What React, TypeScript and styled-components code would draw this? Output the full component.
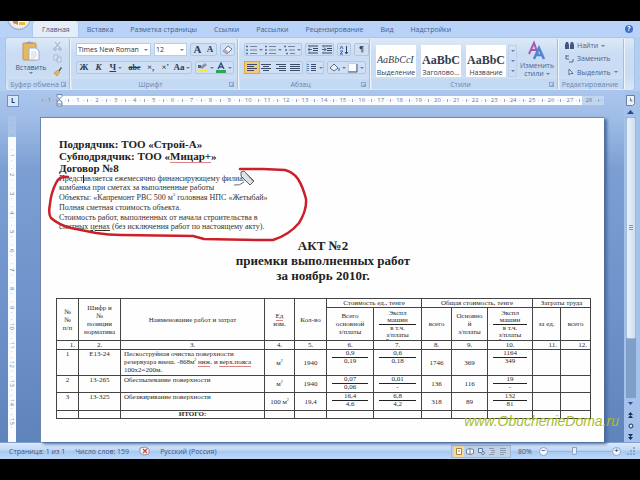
import React from "react";
import styled, { createGlobalStyle, css } from "styled-components";

const Global = createGlobalStyle`
  * { box-sizing: border-box; }
  html, body { margin: 0; background: #000; }
  button, select, input { font: inherit; color: inherit; margin: 0; padding: 0; border: 0; background: none; }
`;

const ui = `"Open Sans", "Noto Sans", sans-serif`;
const serif = `"Liberation Serif", "Times New Roman", serif`;

const Screen = styled.div`
  min-height: 100vh;
  padding: 21px 0;
  display: flex;
  flex-direction: column;
  background: #000;
  font-family: ${ui};
  font-size: 7px;
  line-height: 9px;
  color: #33496f;
`;
const Window = styled.div`
  flex: 1;
  display: flex;
  flex-direction: column;
  background: #b3cef3;
`;

/* ---------- tabs ---------- */
const TabBar = styled.nav`
  position: relative;
  display: flex;
  height: 16px;
  padding-left: 33px;
  overflow: hidden;
  background: #b9d3f8;
`;
const OfficeOrb = styled.button`
  position: absolute;
  left: 7px;
  top: -15px;
  width: 24px;
  height: 24px;
  border-radius: 50%;
  border: 1px solid #8f9fb8;
  background: radial-gradient(circle, #fff 30%, #cfd6e2 90%);
  svg { display: block; }
`;
const Tab = styled.button<{ $active?: boolean }>`
  padding: 0 8px 0 9px;
  height: 16px;
  white-space: nowrap;
  border-radius: 3px 3px 0 0;
  color: #42608f;
  ${(p) => p.$active && css`
    background: #e4eefb;
    color: #3d5580;
    box-shadow: 0 0 2px #8fb0dc;
  `}
`;
const Help = styled.button`
  margin: 4px 7px 0 auto;
  width: 8px;
  height: 8px;
  border-radius: 50%;
  background: #3d6fcf;
  color: #fff;
  font-weight: 700;
  line-height: 8px;
`;

/* ---------- ribbon ---------- */
const Ribbon = styled.div`
  display: flex;
  gap: 2px;
  height: 54px;
  margin: 0 5px;
  padding: 1px 2px;
  border: 1px solid #a9c5e9;
  border-radius: 3px;
  background: linear-gradient(#dce9f8, #cbddf3 30%, #c9dcf3 70%, #d8e8fa);
`;
const Group = styled.section<{ $w: number }>`
  flex: 0 1 ${(p) => p.$w}px;
  min-width: 0;
  display: flex;
  flex-direction: column;
  border-right: 1px solid #a3bfe2;
  box-shadow: 1px 0 #eef5fd;
`;
const GroupBody = styled.div`
  flex: 1;
  display: flex;
  min-height: 0;
`;
const GroupLabel = styled.div`
  display: flex;
  align-items: center;
  height: 10px;
  padding-right: 3px;
  color: #6a86ae;
  background: #c3d9f3;
  white-space: nowrap;
  span { flex: 1; text-align: center; }
`;
const Launcher = styled.button`
  width: 5px;
  height: 5px;
  border: solid #8fa6c8;
  border-width: 1px 0 0 1px;
  background: linear-gradient(135deg, transparent 50%, #8fa6c8 50%);
`;
const Paste = styled.button`
  width: 44px;
  margin-left: 1px;
  display: flex;
  flex-direction: column;
  align-items: center;
  color: #42557a;
`;
const SmallStack = styled.div`
  display: flex;
  flex-direction: column;
  justify-content: space-around;
  button { display: flex; }
`;
const Rows = styled.div`
  flex: 1;
  display: flex;
  flex-direction: column;
  gap: 5px;
  padding: 4px 3px 0 4px;
`;
const Row = styled.div`
  display: flex;
  gap: 3px;
  height: 13px;
`;
const Strip = styled.div<{ $grow?: boolean }>`
  display: flex;
  align-items: stretch;
  flex: ${(p) => (p.$grow ? 1 : "none")};
  justify-content: space-between;
  border: 1px solid #b0c7e4;
  border-radius: 2px;
  background: #d0e0f4;
`;
const Tool = styled.button<{ $w?: number; $on?: boolean }>`
  width: ${(p) => p.$w ?? 14}px;
  display: flex;
  align-items: center;
  justify-content: center;
  gap: 2px;
  ${(p) => p.$on && css`background: #f8c877; box-shadow: 0 0 0 1px #d9a650;`}
`;
const Glyph = styled.span<{ $size?: number; $italic?: boolean; $deco?: string }>`
  font: 700 ${(p) => p.$size ?? 9}px/11px ${serif};
  font-style: ${(p) => (p.$italic ? "italic" : "normal")};
  text-decoration: ${(p) => p.$deco ?? "none"};
  color: #2c3c58;
`;
const Arrow = styled.i`
  width: 0;
  height: 0;
  border: 2px solid transparent;
  border-top-color: #6a7fa3;
  border-bottom: 0;
`;
const Combo = styled.div<{ $grow?: boolean }>`
  position: relative;
  display: flex;
  align-items: center;
  flex: ${(p) => (p.$grow ? "0 0 75px" : "0 0 33px")};
  background: #fff;
  border: 1px solid #b6cce8;
  select { appearance: none; width: 100%; padding-left: 1px; color: #2a3242; line-height: 11px; }
  ${Arrow} { position: absolute; right: 2px; pointer-events: none; }
`;
const Gallery = styled.div`
  flex: none;
  display: flex;
  gap: 5px;
  padding: 6px 2px 0 4px;
`;
const StyleCard = styled.button`
  flex: 0 0 40px;
  height: 32px;
  background: #fff;
  overflow: hidden;
  display: flex;
  flex-direction: column;
  align-items: center;
  justify-content: flex-end;
  color: #333c4e;
  white-space: nowrap;
`;
const Sample = styled.span<{ $soft?: boolean }>`
  width: 38px;
  overflow: hidden;
  text-align: left;
  line-height: 16px;
  font-family: ${serif};
  font-size: ${(p) => (p.$soft ? 10 : 12)}px;
  font-style: ${(p) => (p.$soft ? "italic" : "normal")};
  font-weight: ${(p) => (p.$soft ? 400 : 700)};
`;
const Scroller = styled.div`
  width: 9px;
  height: 32px;
  margin-left: -3px;
  display: flex;
  flex-direction: column;
  justify-content: space-around;
  align-items: center;
  border: 1px solid #bcd0ea;
  button { display: flex; }
`;
const ChangeStyles = styled.button`
  width: 36px;
  display: flex;
  flex-direction: column;
  align-items: center;
  line-height: 8px;
  color: #4a6290;
  span { display: flex; align-items: center; gap: 2px; }
`;
const EditList = styled.div`
  flex: 1;
  display: flex;
  flex-direction: column;
  justify-content: space-around;
  padding-left: 5px;
  button { display: flex; align-items: center; gap: 3px; color: #4a6290; }
`;

/* ---------- work area ---------- */
const Work = styled.div`
  flex: 1;
  display: flex;
  background: linear-gradient(#aac6ee, #9fbce6 8%, #7c9fd3 22%, #6f93ca 60%, #5f83bb);
`;
const LeftRail = styled.div`
  flex: 0 0 40px;
  display: flex;
  flex-direction: column;
  padding: 4px 0 0 7px;
`;
const TabStop = styled.button`
  width: 12px;
  height: 12px;
  border: 1px solid #6d8fc4;
  background: #dce8f8;
  color: #26375a;
  font-weight: 700;
  line-height: 10px;
`;
const VRuler = styled.div`
  flex: 1;
  width: 8px;
  margin: 9px 0 0 1px;
  display: flex;
  flex-direction: column;
  color: #6c7c97;
  font-size: 6px;
  background: linear-gradient(#a9c2e6 21px, #f8fbff 21px);
`;
const VMark = styled.span<{ $lead?: boolean }>`
  height: ${(p) => (p.$lead ? 30 : 19)}px;
  display: flex;
  align-items: center;
  justify-content: space-evenly;
  writing-mode: vertical-rl;
  line-height: 8px;
  &::before, &::after { content: "·"; }
`;
const Center = styled.div`
  flex: 1;
  min-width: 0;
  display: flex;
  flex-direction: column;
`;
const HRuler = styled.div`
  display: flex;
  height: 9px;
  margin: 5px 0 12px;
  color: #6c7c97;
  font-size: 6px;
  line-height: 9px;
`;
const Margin = styled.span`
  flex: 0 0 19px;
  text-align: center;
  background: #a9c2e6;
`;
const Scale = styled.div`
  position: relative;
  flex: 1;
  display: flex;
  background: linear-gradient(90deg, #fbfdff 96%, #c3d6f0 96%);
`;
const HMark = styled.span<{ $part?: number }>`
  flex: ${(p) => p.$part ?? 1} 1 0;
  min-width: 0;
  display: flex;
  justify-content: space-evenly;
  background: linear-gradient(#98a5bb, #98a5bb) left center / 1px 3px no-repeat;
  &::before, &::after { content: "·"; }
`;
const Indent = styled.svg`
  position: absolute;
  left: -3px;
  top: -2px;
`;
const Page = styled.main`
  position: relative;
  flex: 1;
  padding: 20px 14px 0 15px;
  background: #fefefe;
  border-top: 1px solid #6f87ad;
  border-left: 1px solid #6f87ad;
  box-shadow: 3px 2px 3px #4b6a9c;
  font-family: ${serif};
  color: #222;
`;
const Parties = styled.div`
  padding-left: 3px;
  font-size: 11px;
  font-weight: 700;
  line-height: 12px;
`;
const Notes = styled.div`
  display: flex;
  flex-direction: column;
  gap: 1px;
  padding-left: 3px;
  font-size: 8px;
  line-height: 9px;
  color: #333;
  p { margin: 0; }
  sup { font-size: 5px; line-height: 0; }
`;
const Title = styled.h1`
  margin: 7px 0 15px;
  text-align: center;
  font-size: 13px;
  line-height: 15px;
`;
const Spell = styled.span`
  border-bottom: 1px solid #d98585;
`;
const Table = styled.table`
  width: 100%;
  table-layout: fixed;
  border-collapse: collapse;
  font-size: 7px;
  line-height: 8px;
  color: #2a2a2a;
  th, td { border: 1px solid #444; padding: 0; font-weight: 400; text-align: center; }
  sup { font-size: 4px; line-height: 0; }
`;
const Tr = styled.tr<{ $h: number }>`
  height: ${(p) => p.$h}px;
`;
const Cell = styled.td<{ $align?: "left" | "right"; $top?: boolean }>`
  && {
    text-align: ${(p) => p.$align ?? "center"};
    vertical-align: ${(p) => (p.$top ? "top" : "middle")};
    padding: ${(p) => (p.$align ? "0 3px" : 0)};
  }
`;
const Frac = styled.span`
  display: flex;
  flex-direction: column;
  margin: 0 5px;
  line-height: 7px;
  span + span { border-top: 1px solid #222; }
`;
const Total = styled.strong`
  display: block;
  line-height: 7px;
`;
const Stroke = styled.svg`
  position: absolute;
  left: 0;
  top: 44px;
  pointer-events: none;
`;
const Watermark = styled.div`
  position: absolute;
  right: -15px;
  bottom: 12px;
  font: italic 14px/18px "Liberation Sans", Arial, sans-serif;
  color: #a9bd2c;
`;
const Gap = styled.div`
  flex: 0 0 20px;
`;
const ScrollCol = styled.div`
  flex: 0 0 16px;
  display: flex;
  flex-direction: column;
  align-items: center;
  padding: 4px 4px 0 1px;
  background: #a5c2ec;
  button { flex: none; width: 11px; height: 11px; display: flex; align-items: center; justify-content: center; }
`;
const Track = styled.div`
  flex: 1;
  width: 10px;
  display: flex;
  flex-direction: column;
  background: #7f9fcb;
`;
const Thumb = styled.div`
  flex: 0 0 79%;
  display: flex;
  align-items: center;
  justify-content: center;
  border: 1px solid #a4b9d4;
  border-radius: 2px;
  background: linear-gradient(90deg, #e9f2fb, #cfdff0);
`;

/* ---------- status bar ---------- */
const Status = styled.footer`
  display: flex;
  align-items: center;
  height: 17px;
  padding: 0 5px 0 9px;
  border-top: 1px solid #7e9fd0;
  background: linear-gradient(#dbe9fb, #c0d8f6 45%, #a9c8f0 50%, #bdd7f8);
  color: #3d5580;
  white-space: nowrap;
`;
const StatusItem = styled.span`
  display: flex;
  padding-right: 10px;
`;
const Views = styled.div`
  display: flex;
  gap: 1px;
  margin-left: auto;
  padding: 0 2px;
  border: 1px solid #a4b8d6;
  background: #c2d2e6;
`;
const View = styled.button<{ $on?: boolean }>`
  width: 10px;
  height: 11px;
  display: flex;
  align-items: center;
  justify-content: center;
  ${(p) => p.$on && css`background: #f6d9a2;`}
`;
const Percent = styled.button`
  width: 28px;
`;
const Round = styled.button`
  width: 9px;
  height: 9px;
  border-radius: 50%;
  border: 1px solid #8ba3c6;
  background: #f4f8fd;
  font-weight: 700;
  line-height: 6px;
`;
const Zoom = styled.input`
  appearance: none;
  width: 64px;
  height: 9px;
  background: linear-gradient(#9db7dc, #9db7dc) center / 100% 1px no-repeat;
  &::-webkit-slider-thumb {
    appearance: none;
    width: 5px;
    height: 8px;
    border: 1px solid #8ba3c6;
    border-radius: 1px 1px 3px 3px;
    background: #e6effb;
  }
`;
const Grip = styled.svg`
  margin-left: 6px;
`;

const Lines = ({ rows, dots }: { rows: [number, number][]; dots?: boolean }) => (
  <svg width="10" height="9" viewBox="0 0 10 9" stroke="#3b4c6b">
    {rows.map(([a, b], i) => (
      <path key={i} d={`M${a} ${i * 2 + 1.5}H${b}`} />
    ))}
    {dots && <path d="M0 1.5h2M0 3.5h2M0 5.5h2M0 7.5h2" stroke="#5a7fbd" />}
  </svg>
);

const ListIcon = ({ step = 0 }: { step?: number }) => (
  <svg width="11" height="10" viewBox="0 0 11 10" stroke="#75849d">
    <path d={`M4 1.5h7M${4 + step} 5h${7 - step}M${4 + step * 2} 8.5h${7 - step * 2}`} />
    <path d={`M0 1.5h2M${step} 5h2M${step * 2} 8.5h2`} stroke="#4b70ae" strokeWidth="1.5" />
  </svg>
);

const IndentIcon = ({ out }: { out?: boolean }) => (
  <svg width="10" height="9" viewBox="0 0 10 9" stroke="#34445f" fill="none">
    <path d="M0 1h10M5 3.5h5M5 5.5h5M0 8h10" />
    <path d={out ? "M4 4.5H0M2 2.5l-2 2 2 2" : "M0 4.5h4M2 2.5l2 2-2 2"} stroke="#3762ad" />
  </svg>
);

const heads = ["Вставка", "Разметка страницы", "Ссылки", "Рассылки", "Рецензирование", "Вид", "Надстройки"];
const widths = [22, 42, 144, 30, 32, 47, 48, 30, 36, 45, 28, 30];

const Split = ({ a, b }: { a: React.ReactNode; b: React.ReactNode }) => (
  <Frac><span>{a}</span><span>{b}</span></Frac>
);
const Machines = () => (
  <Split a={<>Экспл<br /><Spell>машин</Spell></>} b={<>в т.ч.<br /><Spell>з</Spell>/платы</>} />
);

const works = [
  { h: 26, n: "1", code: "Е13-24", name: <>Пескоструйная очистка поверхности<br />резервуара внеш. -868м<sup>2</sup> <Spell>ниж</Spell>. и <Spell>верх.пояса</Spell><br />100х2=200м.</>, unit: "м", qty: "1940", a: ["0,9", "0,19"], b: ["0,6", "0,18"], sum: "1746", pay: "369", c: ["1164", "349"] },
  { h: 17, n: "2", code: "13-265", name: "Обеспылевание поверхности", unit: "м", qty: "1940", a: ["0,07", "0,06"], b: ["0,01", "-"], sum: "136", pay: "116", c: ["19", "-"] },
  { h: 18, n: "3", code: "13-325", name: "Обезжиривание поверхности", unit: "100 м", qty: "19,4", a: ["16,4", "4,6"], b: ["6,8", "4,2"], sum: "318", pay: "89", c: ["132", "81"] },
];

export default function App() {
  return (
    <Screen>
      <Global />
      <Window>
        <TabBar>
          <OfficeOrb aria-label="Office">
            <svg width="22" height="22" viewBox="0 0 22 22">
              <path d="M5 11h5v7l-5-2z" fill="#e0803a" />
              <path d="M11 10h6v4h-6z" fill="#8ab54a" />
              <path d="M11 15h6v3h-6z" fill="#e9bd3c" />
            </svg>
          </OfficeOrb>
          <Tab $active>Главная</Tab>
          {heads.map((t) => <Tab key={t}>{t}</Tab>)}
          <Help aria-label="Справка">?</Help>
        </TabBar>

        <Ribbon>
          <Group $w={62}>
            <GroupBody>
              <Paste>
                <svg width="20" height="24" viewBox="0 0 20 24">
                  <rect x="2" y="4" width="13" height="17" rx="1" fill="#e8b860" stroke="#c4954a" />
                  <path d="M5 5V3h2a2 2 0 0 1 3 0h2v2z" fill="#9aa3b3" />
                  <path d="M8 9h7l3 3v9H8z" fill="#fbfcff" stroke="#9fb0cc" />
                  <path d="M10 13h5M10 15h6M10 17h6M10 19h4" stroke="#b9c6da" strokeWidth=".7" />
                </svg>
                Вставить
                <Arrow />
              </Paste>
              <SmallStack>
                <button aria-label="Вырезать">
                  <svg width="9" height="10" viewBox="0 0 9 10" fill="none" stroke="#9eabc0"><path d="M2 1l4 5M7 1L3 6" /><circle cx="2" cy="8" r="1.3" /><circle cx="7" cy="8" r="1.3" /></svg>
                </button>
                <button aria-label="Копировать">
                  <svg width="9" height="9" viewBox="0 0 9 9" fill="#dce5f1" stroke="#a9b8cf"><path d="M1 1h4v5H1zM4 3h4v5H4z" /></svg>
                </button>
                <button aria-label="Формат по образцу">
                  <svg width="10" height="11" viewBox="0 0 10 11"><path d="M5 5l3-4 1 1-3 4z" fill="#48536b" /><path d="M1 7l4-3 2 2-3 4z" fill="#e4b84a" stroke="#a7833a" strokeWidth=".5" /></svg>
                </button>
              </SmallStack>
            </GroupBody>
            <GroupLabel><span>Буфер обмена</span><Launcher aria-label="Буфер обмена" /></GroupLabel>
          </Group>

          <Group $w={166}>
            <Rows>
              <Row>
                <Combo $grow><select aria-label="Шрифт"><option>Times New Roman</option></select><Arrow /></Combo>
                <Combo><select aria-label="Размер"><option>12</option></select><Arrow /></Combo>
                <Strip>
                  <Tool $w={13}><Glyph $size={11}>A</Glyph></Tool>
                  <Tool $w={12}><Glyph>A</Glyph></Tool>
                </Strip>
                <Strip>
                  <Tool $w={13} aria-label="Очистить формат">
                    <svg width="11" height="10" viewBox="0 0 11 10"><path d="M1 6l5-5 4 3-5 5z" fill="#f5f7fb" stroke="#6a7a96" /><path d="M1 6l2-2 4 3-2 2z" fill="#b9a7c9" /></svg>
                  </Tool>
                </Strip>
              </Row>
              <Row>
                <Strip $grow>
                  <Tool $w={14}><Glyph>Ж</Glyph></Tool>
                  <Tool $w={14}><Glyph $italic>К</Glyph></Tool>
                  <Tool $w={19}><Glyph $deco="underline">Ч</Glyph><Arrow /></Tool>
                  <Tool $w={17}><Glyph $size={8} $deco="line-through">abc</Glyph></Tool>
                  <Tool $w={14}><Glyph>×,</Glyph></Tool>
                  <Tool $w={14}><Glyph>×'</Glyph></Tool>
                  <Tool $w={18}><Glyph>Aa</Glyph><Arrow /></Tool>
                </Strip>
                <Strip>
                  <Tool $w={19} aria-label="Цвет выделения">
                    <svg width="11" height="11" viewBox="0 0 11 11"><path d="M3 5l5-4 2 2-5 4z" fill="#8a93a6" /><path d="M1 3h3v3H1z" fill="#56627b" /><path d="M0 7h11v3H0z" fill="#f2ee3a" /></svg>
                    <Arrow />
                  </Tool>
                  <Tool $w={18} aria-label="Цвет текста">
                    <svg width="10" height="11" viewBox="0 0 10 11"><path d="M2 7l3-6 3 6M3 5h4" fill="none" stroke="#2d4d7c" strokeWidth="1.3" /><path d="M0 8h10v3H0z" fill="#2fa35c" /></svg>
                    <Arrow />
                  </Tool>
                </Strip>
              </Row>
            </Rows>
            <GroupLabel><span>Шрифт</span><Launcher aria-label="Шрифт" /></GroupLabel>
          </Group>

          <Group $w={130}>
            <Rows>
              <Row>
                <Strip $grow>
                  <Tool $w={19}><ListIcon /><Arrow /></Tool>
                  <Tool $w={19}><ListIcon /><Arrow /></Tool>
                  <Tool $w={18}><ListIcon step={1} /><Arrow /></Tool>
                </Strip>
                <Strip><Tool><IndentIcon out /></Tool><Tool $w={13}><IndentIcon /></Tool></Strip>
                <Strip>
                  <Tool $w={12} aria-label="Сортировка">
                    <svg width="10" height="10" viewBox="0 0 10 10" fill="none"><path d="M1 4l1.500-3L4 4M1 6h3L1 9h3" stroke="#3f61a5" /><path d="M7.500 1v8M6 7l1.500 2L9 7" stroke="#34445f" /></svg>
                  </Tool>
                </Strip>
                <Strip><Tool $w={13}><Glyph>¶</Glyph></Tool></Strip>
              </Row>
              <Row>
                <Strip $grow>
                  <Tool $on><Lines rows={[[0, 10], [0, 7], [0, 10], [0, 7]]} /></Tool>
                  <Tool><Lines rows={[[0, 10], [2, 8], [0, 10], [2, 8]]} /></Tool>
                  <Tool><Lines rows={[[0, 10], [3, 10], [0, 10], [3, 10]]} /></Tool>
                  <Tool><Lines rows={[[0, 10], [0, 10], [0, 10], [0, 10]]} /></Tool>
                </Strip>
                <Strip><Tool $w={16}><Lines dots rows={[[4, 9], [4, 9], [4, 9], [4, 9]]} /><Arrow /></Tool></Strip>
                <Strip>
                  <Tool $w={19} aria-label="Заливка">
                    <svg width="11" height="10" viewBox="0 0 11 10" stroke="#5b6c8b"><path d="M1 5l4-4 4 4-4 3z" fill="#eef3fa" /><path d="M10 5v3" stroke="#3c62a8" /></svg><Arrow />
                  </Tool>
                  <Tool $w={18} aria-label="Границы">
                    <svg width="10" height="10" viewBox="0 0 10 10"><path d="M.5.5h8v8h-8z" fill="#fafcff" stroke="#c3cddd" /><path d="M0 9h9V1" fill="none" stroke="#4d5d7a" /></svg><Arrow />
                  </Tool>
                </Strip>
              </Row>
            </Rows>
            <GroupLabel><span>Абзац</span><Launcher aria-label="Абзац" /></GroupLabel>
          </Group>

          <Group $w={186}>
            <GroupBody>
              <Gallery>
                <StyleCard><Sample $soft>AaBbCcI</Sample>Выделение</StyleCard>
                <StyleCard><Sample>AaBbC</Sample>Заголово...</StyleCard>
                <StyleCard><Sample>AaBbC</Sample>Название</StyleCard>
                <Scroller>
                  <button aria-label="Вверх"><Arrow /></button>
                  <button aria-label="Вниз"><Arrow /></button>
                  <button aria-label="Ещё"><Arrow /></button>
                </Scroller>
              </Gallery>
              <ChangeStyles>
                <svg width="20" height="23" viewBox="0 0 20 23" fill="none" strokeWidth="2">
                  <path d="M2 15L7 4l4 11M4 11h5" stroke="#a55cae" />
                  <path d="M7 20l5-11 5 11M9 16h6" stroke="#4f86cc" strokeWidth="2.500" />
                </svg>
                <span>Изменить</span>
                <span>стили <Arrow /></span>
              </ChangeStyles>
            </GroupBody>
            <GroupLabel><span>Стили</span><Launcher aria-label="Стили" /></GroupLabel>
          </Group>

          <Group $w={64}>
            <GroupBody>
              <EditList>
                <button>
                  <svg width="9" height="9" viewBox="0 0 9 9" fill="#41567c"><path d="M1 1h2l1 3v4H0V4zM6 1h2l1 3v4H5V4z" /></svg>
                  Найти <Arrow />
                </button>
                <button>
                  <svg width="9" height="9" viewBox="0 0 9 9" fill="none" stroke="#53688f"><path d="M1 1v4h3M1 2h3M4 8h4V5" /></svg>
                  Заменить
                </button>
                <button>
                  <svg width="9" height="9" viewBox="0 0 9 9" fill="#fff" stroke="#53688f"><path d="M4 1v6l1.500-1.500H8z" /></svg>
                  Выделить <Arrow />
                </button>
              </EditList>
            </GroupBody>
            <GroupLabel><span>Редактирование</span></GroupLabel>
          </Group>
        </Ribbon>

        <Work>
          <LeftRail>
            <TabStop aria-label="Табуляция">L</TabStop>
            <VRuler>
              <VMark $lead />
              {[1, 2, 3, 4, 5, 6, 7, 8, 9, 10, 11, 12, 13, 14, 15].map((n) => <VMark key={n}>{n}</VMark>)}
            </VRuler>
          </LeftRail>
          <Center>
            <HRuler>
              <Margin>ı · 1 · ı</Margin>
              <Scale>
                <HMark $part={0.5} />
                {Array.from({ length: 28 }, (_, i) => <HMark key={i}>{i + 1}</HMark>)}
                <HMark $part={0.3} />
                <Indent width="7" height="13" viewBox="0 0 7 13" fill="#f3f7fc" stroke="#7487a8">
                  <path d="M1 .5h5v2L3.500 5 1 2.500zM3.500 6L6 8v4H1V8zM1 10h5" />
                </Indent>
              </Scale>
            </HRuler>
            <Page>
              <Parties>
                <div>Подрядчик: ТОО «Строй-А»</div>
                <div>Субподрядчик: ТОО «<Spell>Мицар+</Spell>»</div>
                <div>Договор №8</div>
              </Parties>
              <Notes>
                <p>Представляется ежемесячно финансирующему филиалу<br />комбанка при сметах за выполненные работы</p>
                <p>Объекты: «Капремонт РВС 500 м<sup>3</sup> головная НПС «Жетыбай»</p>
                <p>Полная сметная стоимость объекта.</p>
                <p>Стоимость работ, выполненных от начала строительства в<br />сметных <u>ценах</u> (без исключения работ по настоящему акту).</p>
              </Notes>
              <Title>АКТ №2<br />приемки выполненных работ<br />за ноябрь 2010г.</Title>
              <Table>
                <colgroup>{widths.map((w, i) => <col key={i} width={w} />)}</colgroup>
                <thead>
                  <Tr $h={9}>
                    <th rowSpan={2}>№<br />№<br />п/п</th>
                    <th rowSpan={2}>Шифр и<br />№<br />позиции<br />норматива</th>
                    <th rowSpan={2}>Наименование работ и затрат</th>
                    <th rowSpan={2}><Spell>Ед</Spell><br />изм.</th>
                    <th rowSpan={2}>Кол-во</th>
                    <th colSpan={2}>Стоимость ед., тенге</th>
                    <th colSpan={3}>Общая стоимость, тенге</th>
                    <th colSpan={2}>Затраты труда</th>
                  </Tr>
                  <Tr $h={33}>
                    <th>Всего<br />основной<br />з/платы</th>
                    <th><Machines /></th>
                    <th>всего</th>
                    <th>Основно<br />й<br />з/платы</th>
                    <th><Machines /></th>
                    <th>за ед.</th>
                    <th>всего</th>
                  </Tr>
                </thead>
                <tbody>
                  <Tr $h={9}>
                    {widths.map((_, i) => (
                      <Cell key={i} $align={i === 0 || i > 9 ? "right" : undefined}>{i + 1}.</Cell>
                    ))}
                  </Tr>
                  {works.map((w) => (
                    <Tr $h={w.h} key={w.n}>
                      <Cell $top>{w.n}</Cell>
                      <Cell $top>{w.code}</Cell>
                      <Cell $top $align="left">{w.name}</Cell>
                      <Cell>{w.unit}<sup>2</sup></Cell>
                      <Cell>{w.qty}</Cell>
                      <Cell $top><Split a={w.a[0]} b={w.a[1]} /></Cell>
                      <Cell $top><Split a={w.b[0]} b={w.b[1]} /></Cell>
                      <Cell>{w.sum}</Cell>
                      <Cell>{w.pay}</Cell>
                      <Cell $top><Split a={w.c[0]} b={w.c[1]} /></Cell>
                      <Cell /><Cell />
                    </Tr>
                  ))}
                  <Tr $h={8}>
                    <Cell /><Cell /><Cell><Total>ИТОГО:</Total></Cell>
                    {widths.slice(3).map((_, i) => <Cell key={i} />)}
                  </Tr>
                </tbody>
              </Table>
              <Stroke width="280" height="86" viewBox="40 161 280 86" fill="none">
                <path d="M67 176Q58 175 55 182Q50 192 49 203Q47 213 50 217Q58 224 70 227L95 232Q108 234 120 234L192 235L203 238L260 239H272Q288 234 298 222Q306 209 305 198Q302 186 297 178Q292 171 284 169L262 168H239" stroke="#cb2029" strokeWidth="2.500" strokeLinecap="round" strokeLinejoin="round" />
                <path d="M240 171l3-1 10 10-4 4-9-9z" fill="#dfe3e8" stroke="#5e6268" />
                <path d="M244 171l8 9M233 184q6 1 10-3" stroke="#6b6f76" />
                <path d="M82.500 174v8" stroke="#222" />
              </Stroke>
              <Watermark>www.ObuchenieDoma.ru</Watermark>
            </Page>
          </Center>
          <Gap />
          <ScrollCol>
            <button aria-label="Линейка"><svg width="9" height="11" viewBox="0 0 9 11" fill="#eef3fa" stroke="#6e7f9e"><path d="M.5.5h8v8l-2 2h-6zM4.500 3v3h2" /></svg></button>
            <button aria-label="Прокрутить вверх"><svg width="7" height="4" viewBox="0 0 7 4" fill="#2d4d86"><path d="M0 4l3.500-4L7 4z" /></svg></button>
            <Track><Thumb><svg width="4" height="5" viewBox="0 0 4 5" stroke="#8397b5"><path d="M0 .5h4M0 2.500h4M0 4.500h4" /></svg></Thumb></Track>
            <button aria-label="Прокрутить вниз"><svg width="5" height="3" viewBox="0 0 5 3" fill="#2d4d86"><path d="M0 0h5L2.500 3z" /></svg></button>
            <button aria-label="Предыдущая страница"><svg width="5" height="6" viewBox="0 0 5 6" fill="#1d2f55"><path d="M0 3l2.500-3L5 3zM0 6l2.500-3L5 6z" /></svg></button>
            <button aria-label="Выбор объекта"><svg width="6" height="6" viewBox="0 0 6 6" fill="#dbe6f5" stroke="#1d2f55"><circle cx="3" cy="3" r="2" /></svg></button>
            <button aria-label="Следующая страница"><svg width="5" height="6" viewBox="0 0 5 6" fill="#1d2f55"><path d="M0 0h5L2.500 3zM0 3h5L2.500 6z" /></svg></button>
          </ScrollCol>
        </Work>

        <Status>
          <StatusItem>Страница: 1 из 1</StatusItem>
          <StatusItem>Число слов: 159</StatusItem>
          <StatusItem>
            <svg width="11" height="10" viewBox="0 0 11 10"><path d="M1 2l5-1 4 2v5L5 9 1 7z" fill="#f2f4f8" stroke="#8b97ad" /><path d="M4 3l4 4M8 3L4 7" stroke="#cf4a35" strokeWidth="1.300" /></svg>
          </StatusItem>
          <StatusItem>Русский (Россия)</StatusItem>
          <Views>
            <View $on aria-label="Разметка страницы"><svg width="6" height="7" viewBox="0 0 6 7" fill="#fff" stroke="#a8823f"><path d="M.5.5h5v6h-5zM2 3h2" /></svg></View>
            <View aria-label="Режим чтения"><svg width="8" height="7" viewBox="0 0 8 7" fill="#f4f7fb" stroke="#6f82a5"><path d="M.5 1.500L4 .5l3.500 1v4L4 6.500l-3.500-1zM4 1v5" /></svg></View>
            <View aria-label="Веб-документ"><svg width="7" height="7" viewBox="0 0 7 7" fill="#dfe9f6" stroke="#5e7ba8"><path d="M.5.5h4v4h-4z" /><circle cx="5" cy="5" r="1.500" /></svg></View>
            <View aria-label="Структура"><svg width="6" height="7" viewBox="0 0 6 7" stroke="#8c9ab3"><path d="M0 .5h5M2 2.500h4M2 4.500h4M0 6.500h5" /></svg></View>
            <View aria-label="Черновик"><svg width="6" height="7" viewBox="0 0 6 7" stroke="#8c9ab3"><path d="M0 .5h6M0 2.500h6M0 4.500h6M0 6.500h4" /></svg></View>
          </Views>
          <Percent>80%</Percent>
          <Round aria-label="Мельче">−</Round>
          <Zoom type="range" aria-label="Масштаб" min={10} max={190} defaultValue={82} />
          <Round aria-label="Крупнее">+</Round>
          <Grip width="8" height="8" viewBox="0 0 8 8" fill="#8ea8cf"><path d="M6 0h2v2H6zM3 3h2v2H3zM6 3h2v2H6zM0 6h2v2H0zM3 6h2v2H3zM6 6h2v2H6z" /></Grip>
        </Status>
      </Window>
    </Screen>
  );
}
